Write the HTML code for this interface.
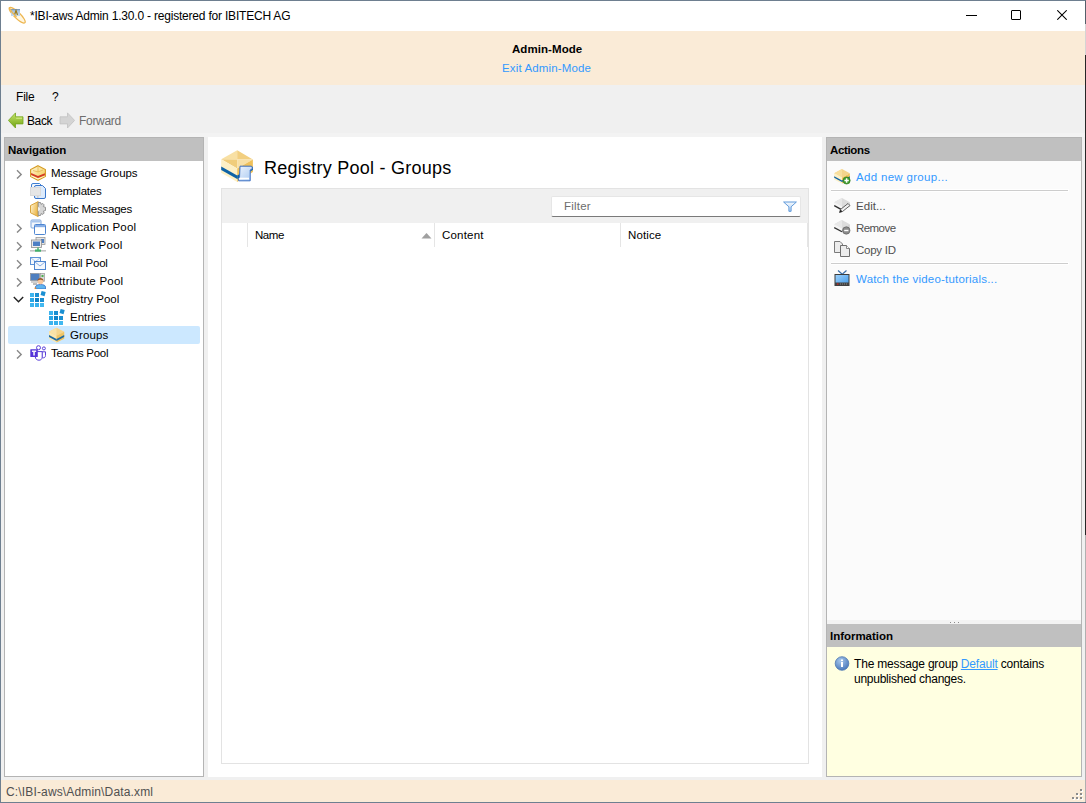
<!DOCTYPE html>
<html><head><meta charset="utf-8">
<style>
*{margin:0;padding:0;box-sizing:border-box}
html,body{width:1086px;height:803px;overflow:hidden;background:#f0f0f0;font-family:"Liberation Sans",sans-serif;font-size:12px;color:#000}
.a{position:absolute}
.t{position:absolute;white-space:nowrap;line-height:1}
#win{position:absolute;left:0;top:0;width:1086px;height:803px;border:1px solid #6e7f90;border-right:1px solid #55606b;background:#f0f0f0}
#title{left:1px;top:1px;width:1084px;height:30px;background:#fff}
#banner{left:1px;top:31px;width:1084px;height:54px;background:#faebd7}
.panel{position:absolute;border:1px solid #b4b4b4}
.hdr{position:absolute;left:0;top:0;right:0;height:23px;background:#c0c0c0}
.hdr span{position:absolute;left:3px;top:7px;font-weight:bold;font-size:11.5px;letter-spacing:-0.05px;line-height:1}
.row{position:absolute;left:0;height:18px;width:196px}
.chev{position:absolute;left:9px;top:0}
.ico{position:absolute;top:1px}
.lbl{position:absolute;top:4px;white-space:nowrap;line-height:1;letter-spacing:-0.45px}
#status{left:1px;top:780px;width:1084px;height:22px;background:#faebd7}
.link{color:#3399ff}
</style></head><body>
<div id="win"></div>
<div id="title" class="a"></div>
<!-- app icon -->
<svg class="a" style="left:6px;top:4px" width="22" height="22" viewBox="0 0 22 22">
 <defs><linearGradient id="ab" x1="0" y1="0" x2="0" y2="1"><stop offset="0" stop-color="#6f8eae"/><stop offset="0.25" stop-color="#a9c2dc"/><stop offset="1" stop-color="#c4dcf4"/></linearGradient></defs>
 <ellipse cx="11.2" cy="11.2" rx="10.8" ry="3" transform="rotate(44 11.2 11.2)" fill="#fff6e0" stroke="#edb650" stroke-width="1.2"/>
 <rect x="5" y="5" width="9" height="7" fill="url(#ab)"/>
 <path d="M8.5 11L10 6.5L11.5 11" fill="none" stroke="#9c7a18" stroke-width="1.2"/>
 <path d="M3.2 3.5Q5.5 8.5 10.5 13" fill="none" stroke="#edb650" stroke-width="1.2"/>
</svg>
<div class="t" style="left:30px;top:10px;font-size:12px;letter-spacing:-0.2px">*IBI-aws Admin 1.30.0 - registered for IBITECH AG</div>
<!-- window buttons -->
<div class="a" style="left:966px;top:15px;width:11px;height:1px;background:#000"></div>
<div class="a" style="left:1011px;top:10px;width:10px;height:10px;border:1px solid #000;border-radius:1px"></div>
<svg class="a" style="left:1057px;top:10px" width="10" height="10" viewBox="0 0 10 10"><path d="M0.3 0.3L9.7 9.7M9.7 0.3L0.3 9.7" stroke="#000" stroke-width="1.05"/></svg>

<div id="banner" class="a"></div>
<div class="t" style="left:512px;top:44px;font-weight:bold;font-size:11.5px;letter-spacing:0.07px">Admin-Mode</div>
<div class="t link" style="left:502px;top:63px;font-size:11.5px;letter-spacing:0.14px">Exit Admin-Mode</div>

<!-- menu -->
<div class="t" style="left:16px;top:91px;letter-spacing:-0.2px">File</div>
<div class="t" style="left:52px;top:91px">?</div>
<!-- toolbar -->
<svg class="a" style="left:8px;top:112px" width="16" height="16" viewBox="0 0 16 16">
 <defs><linearGradient id="gb" x1="0" y1="0" x2="0" y2="1"><stop offset="0" stop-color="#c6e46a"/><stop offset="1" stop-color="#6fa313"/></linearGradient></defs>
 <path d="M0.4 8.4L7.5 0.9V4.8H15V11.9H7.5V16Z" fill="url(#gb)" stroke="#74a51c" stroke-width="0.8"/><path d="M8.2 6.2H14" stroke="#d8f08c" stroke-width="1"/>
</svg>
<div class="t" style="left:27px;top:115px;letter-spacing:-0.4px">Back</div>
<svg class="a" style="left:59px;top:112px" width="16" height="16" viewBox="0 0 16 16">
 <path d="M15.6 8.4L8.5 0.9V4.8H1V11.9H8.5V16Z" fill="#d4d4d4" stroke="#c2c2c2" stroke-width="0.8"/>
</svg>
<div class="t" style="left:79px;top:115px;color:#6d6d6d;letter-spacing:-0.3px">Forward</div>

<div class="a" style="left:1px;top:133px;width:1084px;height:4px;background:#f3f3f3"></div>
<!-- navigation panel -->
<div class="panel" style="left:4px;top:137px;width:200px;height:640px;background:#fff">
 <div class="hdr"><span>Navigation</span></div>
</div>
<!--TREE-->
<svg class="a" style="left:15.5px;top:169px" width="7" height="10" viewBox="0 0 7 10"><path d="M1 1.2L5.2 5.4L1 9.6" fill="none" stroke="#8a8a8a" stroke-width="1.4"/></svg><svg class="a" style="left:30px;top:165px" width="16" height="16" viewBox="0 0 16 16"><defs><linearGradient id="g1" x1="0" y1="0" x2="1" y2="1"><stop offset="0" stop-color="#fff8dc"/><stop offset="1" stop-color="#f3c744"/></linearGradient></defs>
<path d="M8 0.7L15.4 4.5V11.5L8 15.3L0.6 11.5V4.5Z" fill="url(#g1)" stroke="#d59b22" stroke-width="1.1"/>
<path d="M8 2L8 7M3 5.5L8 7L13 5" fill="none" stroke="#e3b34a" stroke-width="0.7"/>
<path d="M1.1 8L8 11L14.9 8.3V10.3L8 12.9L1.1 9.9Z" fill="#d33a26"/>
<path d="M1.1 10.5L8 13.5L14.9 10.8V11.2L8 14.6L1.1 11.2Z" fill="#fffbe0"/></svg><div class="t" style="left:51px;top:168px;font-size:11.5px;letter-spacing:-0.08px">Message Groups</div>
<svg class="a" style="left:30px;top:183px" width="16" height="16" viewBox="0 0 16 16"><path d="M1.5 8V2Q1.5 0.5 3 0.5H9.5L11.5 2.5" fill="#f2f7fd" stroke="#3f7fd2" stroke-width="1"/>
<path d="M4.5 4Q4.5 2.5 6 2.5H12.5L15.5 5.5V14Q15.5 15.5 14 15.5H6Q4.5 15.5 4.5 14Z" fill="#dceafb" stroke="#3a77cc" stroke-width="1"/>
<rect x="0" y="4" width="11" height="9" fill="#dadada"/><rect x="1" y="5" width="9" height="7" fill="#e6e6e6"/>
<rect x="7" y="13" width="1.6" height="2" fill="#cfcfcf"/></svg><div class="t" style="left:51px;top:186px;font-size:11.5px;letter-spacing:-0.2px">Templates</div>
<svg class="a" style="left:30px;top:201px" width="16" height="16" viewBox="0 0 16 16"><defs><linearGradient id="sg" x1="0" y1="0" x2="1" y2="0.4"><stop offset="0" stop-color="#fff6d8"/><stop offset="1" stop-color="#ecb84a"/></linearGradient></defs>
<path d="M8.2 0.6L0.5 4.5V11.8L8.2 15.6Z" fill="url(#sg)" stroke="#d9a43c" stroke-width="1"/>
<path d="M8.2 1.5H10.5L11 3.3L12.8 2.5L14.2 3.9L13.3 5.6L15.5 6.3V9.5L13.3 10.2L14.2 12L12.8 13.4L11 12.6L10.5 14.5H8.2Z" fill="#d6d6d6" stroke="#8a8a8a" stroke-width="0.9"/>
<path d="M8.2 5.5L10 8L8.2 10.5Z" fill="#fff"/></svg><div class="t" style="left:51px;top:204px;font-size:11.5px;letter-spacing:-0.22px">Static Messages</div>
<svg class="a" style="left:15.5px;top:223px" width="7" height="10" viewBox="0 0 7 10"><path d="M1 1.2L5.2 5.4L1 9.6" fill="none" stroke="#8a8a8a" stroke-width="1.4"/></svg><svg class="a" style="left:30px;top:219px" width="16" height="16" viewBox="0 0 16 16"><rect x="1" y="1" width="10" height="8" rx="1" fill="#f3f7fc" stroke="#7ea6dc" stroke-width="1"/>
<rect x="1.5" y="1.5" width="9" height="2" fill="#a9c6ec"/>
<rect x="4.5" y="5.5" width="11" height="10" rx="1" fill="#fff" stroke="#4e86d2" stroke-width="1"/>
<rect x="5" y="6" width="10" height="2.2" fill="#86aee6"/></svg><div class="t" style="left:51px;top:222px;font-size:11.5px;letter-spacing:0.17px">Application Pool</div>
<svg class="a" style="left:15.5px;top:241px" width="7" height="10" viewBox="0 0 7 10"><path d="M1 1.2L5.2 5.4L1 9.6" fill="none" stroke="#8a8a8a" stroke-width="1.4"/></svg><svg class="a" style="left:30px;top:237px" width="16" height="16" viewBox="0 0 16 16"><rect x="6" y="0.5" width="9" height="7" fill="#e6e6e6" stroke="#9a9a9a" stroke-width="0.8"/>
<rect x="11" y="2" width="3" height="4" fill="#4d7fc4"/>
<rect x="1.5" y="3" width="10" height="7.5" fill="#ececec" stroke="#8f8f8f" stroke-width="0.8"/>
<rect x="3" y="4.5" width="7" height="4.5" fill="#4d7fc4"/>
<rect x="0" y="13" width="16" height="1.6" fill="#c4c4c4"/><rect x="5" y="12.5" width="6" height="2.2" fill="#41b06a"/><rect x="7.3" y="10.5" width="1.4" height="2.5" fill="#41b06a"/></svg><div class="t" style="left:51px;top:240px;font-size:11.5px;letter-spacing:0.27px">Network Pool</div>
<svg class="a" style="left:15.5px;top:259px" width="7" height="10" viewBox="0 0 7 10"><path d="M1 1.2L5.2 5.4L1 9.6" fill="none" stroke="#8a8a8a" stroke-width="1.4"/></svg><svg class="a" style="left:30px;top:255px" width="16" height="16" viewBox="0 0 16 16"><rect x="0.5" y="2.5" width="10" height="7" fill="#f4f8fd" stroke="#5e92d6" stroke-width="1"/>
<path d="M1 3L5.5 6.5L10 3" fill="none" stroke="#7fa9e0" stroke-width="0.7"/>
<rect x="4.5" y="6.5" width="11" height="8" fill="#f4f8fd" stroke="#4f86d0" stroke-width="1"/>
<path d="M5 7L10 11L15 7" fill="none" stroke="#6c9bdc" stroke-width="0.8"/></svg><div class="t" style="left:51px;top:258px;font-size:11.5px;letter-spacing:-0.19px">E-mail Pool</div>
<svg class="a" style="left:15.5px;top:277px" width="7" height="10" viewBox="0 0 7 10"><path d="M1 1.2L5.2 5.4L1 9.6" fill="none" stroke="#8a8a8a" stroke-width="1.4"/></svg><svg class="a" style="left:30px;top:273px" width="16" height="16" viewBox="0 0 16 16"><rect x="0.5" y="0.5" width="9" height="7" fill="#4f7fbf" stroke="#8a8a8a" stroke-width="0.6"/>
<rect x="1" y="8" width="8" height="2" fill="#d0d0d0"/><rect x="3" y="10" width="4" height="2" fill="#bdbdbd"/>
<rect x="10.5" y="0.5" width="4" height="8" fill="#d9d9d9" stroke="#8a8a8a" stroke-width="0.6"/><rect x="11.5" y="2" width="2" height="2" fill="#4caf50"/>
<path d="M5.5 16V14C5.5 12.3 7.5 11.5 10.5 11.5C13.5 11.5 15.5 12.3 15.5 14V16Z" fill="#5fb4ee" stroke="#2a62c0" stroke-width="0.7"/>
<circle cx="10.5" cy="8.5" r="2.8" fill="#f6c9a2"/><path d="M7.5 8C7.5 5.8 9 5 10.5 5C12 5 13.5 5.8 13.5 8C12.5 7 11 6.8 10.5 6.8C10 6.8 8.5 7 7.5 8Z" fill="#9b5a2a"/>
<rect x="4.6" y="14.5" width="1.5" height="1.5" fill="#e8862c"/></svg><div class="t" style="left:51px;top:276px;font-size:11.5px;letter-spacing:0.24px">Attribute Pool</div>
<svg class="a" style="left:13px;top:296px" width="11" height="7" viewBox="0 0 11 7"><path d="M0.8 1L5.5 5.7L10.2 1" fill="none" stroke="#222" stroke-width="1.4"/></svg><svg class="a" style="left:30px;top:291px" width="16" height="16" viewBox="0 0 16 16"><g shape-rendering="crispEdges"><rect x="0" y="2" width="4" height="4" fill="#3db4ee"/><rect x="5" y="2" width="4" height="4" fill="#1a8fd2"/><rect x="0" y="7" width="4" height="4" fill="#2aa6e6"/><rect x="5" y="7" width="4" height="4" fill="#0f82c8"/><rect x="10" y="7" width="4" height="4" fill="#1a8fd2"/><rect x="0" y="12" width="4" height="4" fill="#3db4ee"/><rect x="5" y="12" width="4" height="4" fill="#36b0ec"/><rect x="10" y="12" width="4" height="4" fill="#42b8f0"/></g>
<rect x="11" y="0.5" width="4.2" height="4.2" fill="#1a8fd2" transform="rotate(15 13.1 2.6)"/></svg><div class="t" style="left:51px;top:294px;font-size:11.5px;letter-spacing:-0.01px">Registry Pool</div>
<svg class="a" style="left:49px;top:309px" width="16" height="16" viewBox="0 0 16 16"><g shape-rendering="crispEdges"><rect x="0" y="2" width="4" height="4" fill="#3db4ee"/><rect x="5" y="2" width="4" height="4" fill="#1a8fd2"/><rect x="0" y="7" width="4" height="4" fill="#2aa6e6"/><rect x="5" y="7" width="4" height="4" fill="#0f82c8"/><rect x="10" y="7" width="4" height="4" fill="#1a8fd2"/><rect x="0" y="12" width="4" height="4" fill="#3db4ee"/><rect x="5" y="12" width="4" height="4" fill="#36b0ec"/><rect x="10" y="12" width="4" height="4" fill="#42b8f0"/></g>
<rect x="11" y="0.5" width="4.2" height="4.2" fill="#1a8fd2" transform="rotate(15 13.1 2.6)"/></svg><div class="t" style="left:70px;top:312px;font-size:11.5px;letter-spacing:-0.02px">Entries</div>
<div class="a" style="left:8px;top:326px;width:192px;height:18px;background:#cce8ff;border-radius:2px"></div><svg class="a" style="left:49px;top:327px" width="16" height="16" viewBox="0 0 16 16"><path d="M7.5 0.8L15.2 4.8V11.8L7.5 15.6L-0.2 11.8V4.8Z" fill="#fbe7b0"/>
<path d="M7.5 0.8L15.2 4.8L7.5 8.8L-0.2 4.8Z" fill="#f5d58e"/>
<path d="M7.5 0.8L7.5 8.8L-0.2 4.8Z" fill="#f9e2a8"/>
<path d="M7.5 8.8L15.2 4.8V11.8L7.5 15.6Z" fill="#efc465"/>
<path d="M-0.2 8L7.5 12V14L-0.2 10Z" fill="#1f6aa0"/><path d="M7.5 12L15.2 8V10L7.5 14Z" fill="#1f6aa0"/></svg><div class="t" style="left:70px;top:330px;font-size:11.5px;letter-spacing:0.1px">Groups</div>
<svg class="a" style="left:15.5px;top:349px" width="7" height="10" viewBox="0 0 7 10"><path d="M1 1.2L5.2 5.4L1 9.6" fill="none" stroke="#8a8a8a" stroke-width="1.4"/></svg><svg class="a" style="left:30px;top:345px" width="16" height="16" viewBox="0 0 16 16"><circle cx="13.9" cy="3.4" r="1.5" fill="#fff" stroke="#5b40d8" stroke-width="1"/>
<path d="M12 6.8H15.5V10.5C15.5 12 14.6 12.8 13.5 12.8C12.5 12.8 12 12.3 12 12Z" fill="#fff" stroke="#5b40d8" stroke-width="1"/>
<rect x="11.3" y="7.5" width="1" height="5" fill="#cfc6f2"/>
<circle cx="8.5" cy="2.7" r="2" fill="#fff" stroke="#5b40d8" stroke-width="1"/>
<path d="M5 6.6H12.2V12.2C12.2 14 10.8 15.2 9 15.2C7.2 15.2 5.8 14.2 5.5 13Z" fill="#fff" stroke="#5b40d8" stroke-width="1"/>
<rect x="0.3" y="4.2" width="7.5" height="7.8" rx="0.6" fill="#5534d8"/>
<path d="M1.9 6.2H6.2M4.05 6.2V10.6" stroke="#f4f2fb" stroke-width="1.6"/></svg><div class="t" style="left:51px;top:348px;font-size:11.5px;letter-spacing:-0.29px">Teams Pool</div>
<!--/TREE-->

<!-- center panel -->
<div class="a" style="left:208px;top:137px;width:614px;height:640px;background:#fff"></div>
<svg class="a" style="left:218px;top:147px" width="40" height="40" viewBox="0 0 40 40">
 <defs>
  <linearGradient id="sc" x1="0" y1="0" x2="1" y2="1"><stop offset="0" stop-color="#eef5fe"/><stop offset="1" stop-color="#a8c8f0"/></linearGradient>
 </defs>
 <path d="M19.2 3.2L3.2 12.2L19.2 12.4Z" fill="#f8e0a4"/>
 <path d="M19.2 3.2L34.9 12.5L19.2 12.4Z" fill="#f2cf80"/>
 <path d="M3.2 12.2L19.2 21.5L19.2 12.4Z" fill="#f0cd7c"/>
 <path d="M34.9 12.5L19.2 21.5L19.2 12.4Z" fill="#f8e0a6"/>
 <path d="M3.2 12.2L19.2 21.5V35L3.2 25.8Z" fill="#fdf0c6"/>
 <path d="M19.2 21.5L34.9 12.5V25L19.2 35Z" fill="#f0c15a"/>
 <path d="M3.2 19.5L19.2 28.5V32L3.2 23Z" fill="#0e62a6"/>
 <path d="M19.2 28.5L34.9 19.5V23L19.2 32Z" fill="#0e62a6"/>
 <path d="M22 19.2H33.2Q34.8 19.4 34.2 22L32.2 23V33.8H20.8Q20 33.5 20.5 31.5L21.5 31Z" fill="url(#sc)" stroke="#3b6fc2" stroke-width="1"/>
 <path d="M21.2 31.5H31" stroke="#fff" stroke-width="1.6"/>
</svg>
<div class="t" style="left:264px;top:159px;font-size:18px;letter-spacing:0.25px">Registry Pool - Groups</div>
<div class="a" style="left:221px;top:188px;width:588px;height:576px;border:1px solid #e3e3e3;background:#fff"></div>
<div class="a" style="left:222px;top:189px;width:586px;height:34px;background:#f0f0f0"></div>
<div class="a" style="left:551px;top:196px;width:250px;height:21px;background:#fff;border:1px solid #e6e6e6;border-bottom:1px solid #7a7a7a;border-radius:2px"></div>
<div class="t" style="left:564px;top:201px;color:#6d6d6d;font-size:11.5px;letter-spacing:0.2px">Filter</div>
<svg class="a" style="left:783px;top:201px" width="14" height="11" viewBox="0 0 14 11">
 <defs><linearGradient id="fn" x1="0" y1="0" x2="0" y2="1"><stop offset="0" stop-color="#f4f9fe"/><stop offset="1" stop-color="#b9d4f2"/></linearGradient></defs><path d="M0.6 1H13.4L8.1 5.8V10.3H5.9V5.8Z" fill="url(#fn)" stroke="#4f8ed6" stroke-width="0.9"/>
</svg>
<div class="a" style="left:247px;top:223px;width:1px;height:24px;background:#e5e5e5"></div>
<div class="a" style="left:434px;top:223px;width:1px;height:24px;background:#e5e5e5"></div>
<div class="a" style="left:620px;top:223px;width:1px;height:24px;background:#e5e5e5"></div>
<div class="a" style="left:807px;top:223px;width:1px;height:24px;background:#e5e5e5"></div>
<div class="t" style="left:255px;top:230px;font-size:11.5px;letter-spacing:-0.43px">Name</div>
<svg class="a" style="left:421px;top:232px" width="11" height="7" viewBox="0 0 11 7"><path d="M0.5 6.5L5.5 1L10.5 6.5Z" fill="#a0a0a0"/></svg>
<div class="t" style="left:442px;top:230px;font-size:11.5px;letter-spacing:0.2px">Content</div>
<div class="t" style="left:628px;top:230px;font-size:11.5px;letter-spacing:0.12px">Notice</div>

<!-- actions panel -->
<div class="panel" style="left:826px;top:137px;width:256px;height:640px;background:#fbfbfb">
 <div class="hdr"><span style="letter-spacing:-0.35px">Actions</span></div>
</div>
<div class="a" style="left:831px;top:189px;width:238px;height:3px;background:#fff"></div><div class="a" style="left:831px;top:190px;width:237px;height:1px;background:#cdcdcd"></div>
<div class="a" style="left:831px;top:262px;width:238px;height:3px;background:#fff"></div><div class="a" style="left:831px;top:263px;width:237px;height:1px;background:#cdcdcd"></div>
<div class="t link" style="left:856px;top:172px;font-size:11.5px;letter-spacing:0.32px">Add new group...</div>
<div class="t" style="left:856px;top:201px;color:#505050;font-size:11.5px;letter-spacing:0.06px">Edit...</div>
<div class="t" style="left:856px;top:223px;color:#505050;font-size:11.5px;letter-spacing:-0.56px">Remove</div>
<div class="t" style="left:856px;top:245px;color:#505050;font-size:11.5px;letter-spacing:-0.25px">Copy ID</div>
<div class="t link" style="left:856px;top:274px;font-size:11.5px;letter-spacing:0.2px">Watch the video-tutorials...</div>


<svg class="a" style="left:834px;top:168px" width="17" height="17" viewBox="0 0 17 17">
 <path d="M8 1L15.8 5.2L8 9.4L0.2 5.2Z" fill="#f4d48c"/><path d="M8 1V9.4L0.2 5.2Z" fill="#f8df9e"/>
 <path d="M0.2 5.2L8 9.4V15.6L0.2 11.4Z" fill="#fdf0c6"/><path d="M8 9.4L15.8 5.2V11.4L8 15.6Z" fill="#f0c15a"/>
 <path d="M0.2 8.2L8 12.4V13.9L0.2 9.7Z" fill="#0e62a6"/><path d="M8 12.4L15.8 8.2V9.7L8 13.9Z" fill="#0e62a6"/>
 <circle cx="12.6" cy="12.5" r="3.6" fill="#3f9a2c" stroke="#2d7a1c" stroke-width="0.6"/>
 <path d="M12.6 10.3V14.7M10.4 12.5H14.8" stroke="#fff" stroke-width="1.5"/>
</svg>
<svg class="a" style="left:834px;top:197px" width="17" height="17" viewBox="0 0 17 17">
 <path d="M8 1L15.8 5.2L8 9.4L0.2 5.2Z" fill="#dcdcdc"/><path d="M8 1V9.4L0.2 5.2Z" fill="#e8e8e8"/>
 <path d="M0.2 5.2L8 9.4V13.6L0.2 9.4Z" fill="#f4f4f4"/><path d="M8 9.4L15.8 5.2V9.4L8 13.6Z" fill="#cfcfcf"/>
 <path d="M0.2 8.6L7 12.4" stroke="#2e2e2e" stroke-width="1.4"/>
 <path d="M5.5 15.5L6.5 12.5L14 6.5L16 8.5L8.5 14.5Z" fill="#f0f0f0" stroke="#555" stroke-width="0.9"/>
 <path d="M5.5 15.5L6.5 12.5L8.5 14.5Z" fill="#222"/>
</svg>
<svg class="a" style="left:834px;top:219px" width="17" height="17" viewBox="0 0 17 17">
 <path d="M8 1L15.8 5.2L8 9.4L0.2 5.2Z" fill="#dcdcdc"/><path d="M8 1V9.4L0.2 5.2Z" fill="#e8e8e8"/>
 <path d="M0.2 5.2L8 9.4V13.6L0.2 9.4Z" fill="#f4f4f4"/><path d="M8 9.4L15.8 5.2V9.4L8 13.6Z" fill="#cfcfcf"/>
 <path d="M0.2 8.6L8 12.8" stroke="#333" stroke-width="1.3"/>
 <circle cx="12.3" cy="11.5" r="3.7" fill="#8c8c8c" stroke="#555" stroke-width="0.6"/>
 <path d="M10.2 11.5H14.4" stroke="#fff" stroke-width="1.4"/>
</svg>
<svg class="a" style="left:834px;top:241px" width="16" height="16" viewBox="0 0 16 16">
 <path d="M0.5 0.5H6L8.5 3V11.5H0.5Z" fill="#ececec" stroke="#7a7a7a" stroke-width="1"/>
 <path d="M6.5 4.5H12.5L15.5 7.5V15.5H6.5Z" fill="#ececec" stroke="#6f6f6f" stroke-width="1"/>
 <path d="M12.5 4.5V7.5H15.5" fill="#fff" stroke="#6f6f6f" stroke-width="0.8"/>
</svg>
<svg class="a" style="left:834px;top:270px" width="16" height="16" viewBox="0 0 16 16">
 <path d="M4 0.5L8 4M12.5 0.5L8.5 4" stroke="#3a6fa8" stroke-width="1.2"/>
 <defs><linearGradient id="tv" x1="0" y1="0" x2="1" y2="1"><stop offset="0" stop-color="#9fd2fb"/><stop offset="1" stop-color="#3e98ea"/></linearGradient></defs>
 <rect x="1" y="4.5" width="14" height="11" fill="url(#tv)" stroke="#3d3d3d" stroke-width="1"/>
 <rect x="1" y="12.5" width="14" height="3" fill="#444"/>
 <rect x="3" y="13.5" width="1.4" height="1.2" fill="#e02020"/>
 <g fill="#888"><rect x="6" y="13.5" width="1" height="1"/><rect x="8" y="13.5" width="1" height="1"/><rect x="10" y="13.5" width="1" height="1"/><rect x="12" y="13.5" width="1" height="1"/></g>
</svg>

<!-- info panel -->
<div class="a" style="left:827px;top:620px;width:254px;height:4px;background:#f3f3f3"></div>
<div class="a" style="left:950px;top:622px;width:1px;height:1px;background:#8a8a8a"></div>
<div class="a" style="left:954px;top:622px;width:1px;height:1px;background:#8a8a8a"></div>
<div class="a" style="left:958px;top:622px;width:1px;height:1px;background:#8a8a8a"></div>
<div class="a" style="left:827px;top:624px;width:254px;height:23px;background:#c0c0c0"></div>
<div class="t" style="left:830px;top:631px;font-weight:bold;font-size:11.5px;letter-spacing:-0.03px">Information</div>
<div class="a" style="left:827px;top:647px;width:254px;height:129px;background:#ffffe1"></div>
<svg class="a" style="left:834px;top:656px" width="16" height="16" viewBox="0 0 16 16">
 <defs><radialGradient id="ig" cx="0.4" cy="0.3" r="0.8"><stop offset="0" stop-color="#a9c8ec"/><stop offset="1" stop-color="#3d6fb6"/></radialGradient></defs>
 <circle cx="8" cy="7.5" r="6.8" fill="url(#ig)" stroke="#4c76b0" stroke-width="0.8"/>
 <rect x="7" y="6" width="2" height="5" fill="#fff"/><rect x="7" y="3.5" width="2" height="1.6" fill="#fff"/>
</svg>
<div class="t" style="left:854px;top:658px;letter-spacing:-0.18px">The message group <span style="color:#3399ff;text-decoration:underline">Default</span> contains</div>
<div class="t" style="left:854px;top:673px;letter-spacing:-0.25px">unpublished changes.</div>

<!-- status -->
<div id="status" class="a"></div>
<div class="a" style="left:1081px;top:790px;width:2px;height:2px;background:#fff"></div><div class="a" style="left:1080px;top:789px;width:2px;height:2px;background:#8c8c8c"></div><div class="a" style="left:1077px;top:794px;width:2px;height:2px;background:#fff"></div><div class="a" style="left:1076px;top:793px;width:2px;height:2px;background:#8c8c8c"></div><div class="a" style="left:1081px;top:794px;width:2px;height:2px;background:#fff"></div><div class="a" style="left:1080px;top:793px;width:2px;height:2px;background:#8c8c8c"></div><div class="a" style="left:1073px;top:798px;width:2px;height:2px;background:#fff"></div><div class="a" style="left:1072px;top:797px;width:2px;height:2px;background:#8c8c8c"></div><div class="a" style="left:1077px;top:798px;width:2px;height:2px;background:#fff"></div><div class="a" style="left:1076px;top:797px;width:2px;height:2px;background:#8c8c8c"></div><div class="a" style="left:1081px;top:798px;width:2px;height:2px;background:#fff"></div><div class="a" style="left:1080px;top:797px;width:2px;height:2px;background:#8c8c8c"></div>
<div class="t" style="left:6px;top:786px;color:#505050;letter-spacing:0.15px">C:\IBI-aws\Admin\Data.xml</div>
<div class="a" style="left:1085px;top:24px;width:1px;height:31px;background:#d4d4d4"></div>
<div class="a" style="left:1085px;top:55px;width:1px;height:480px;background:#262626"></div>
<div class="a" style="left:1085px;top:535px;width:1px;height:267px;background:#b0b0b0"></div>
</body></html>
